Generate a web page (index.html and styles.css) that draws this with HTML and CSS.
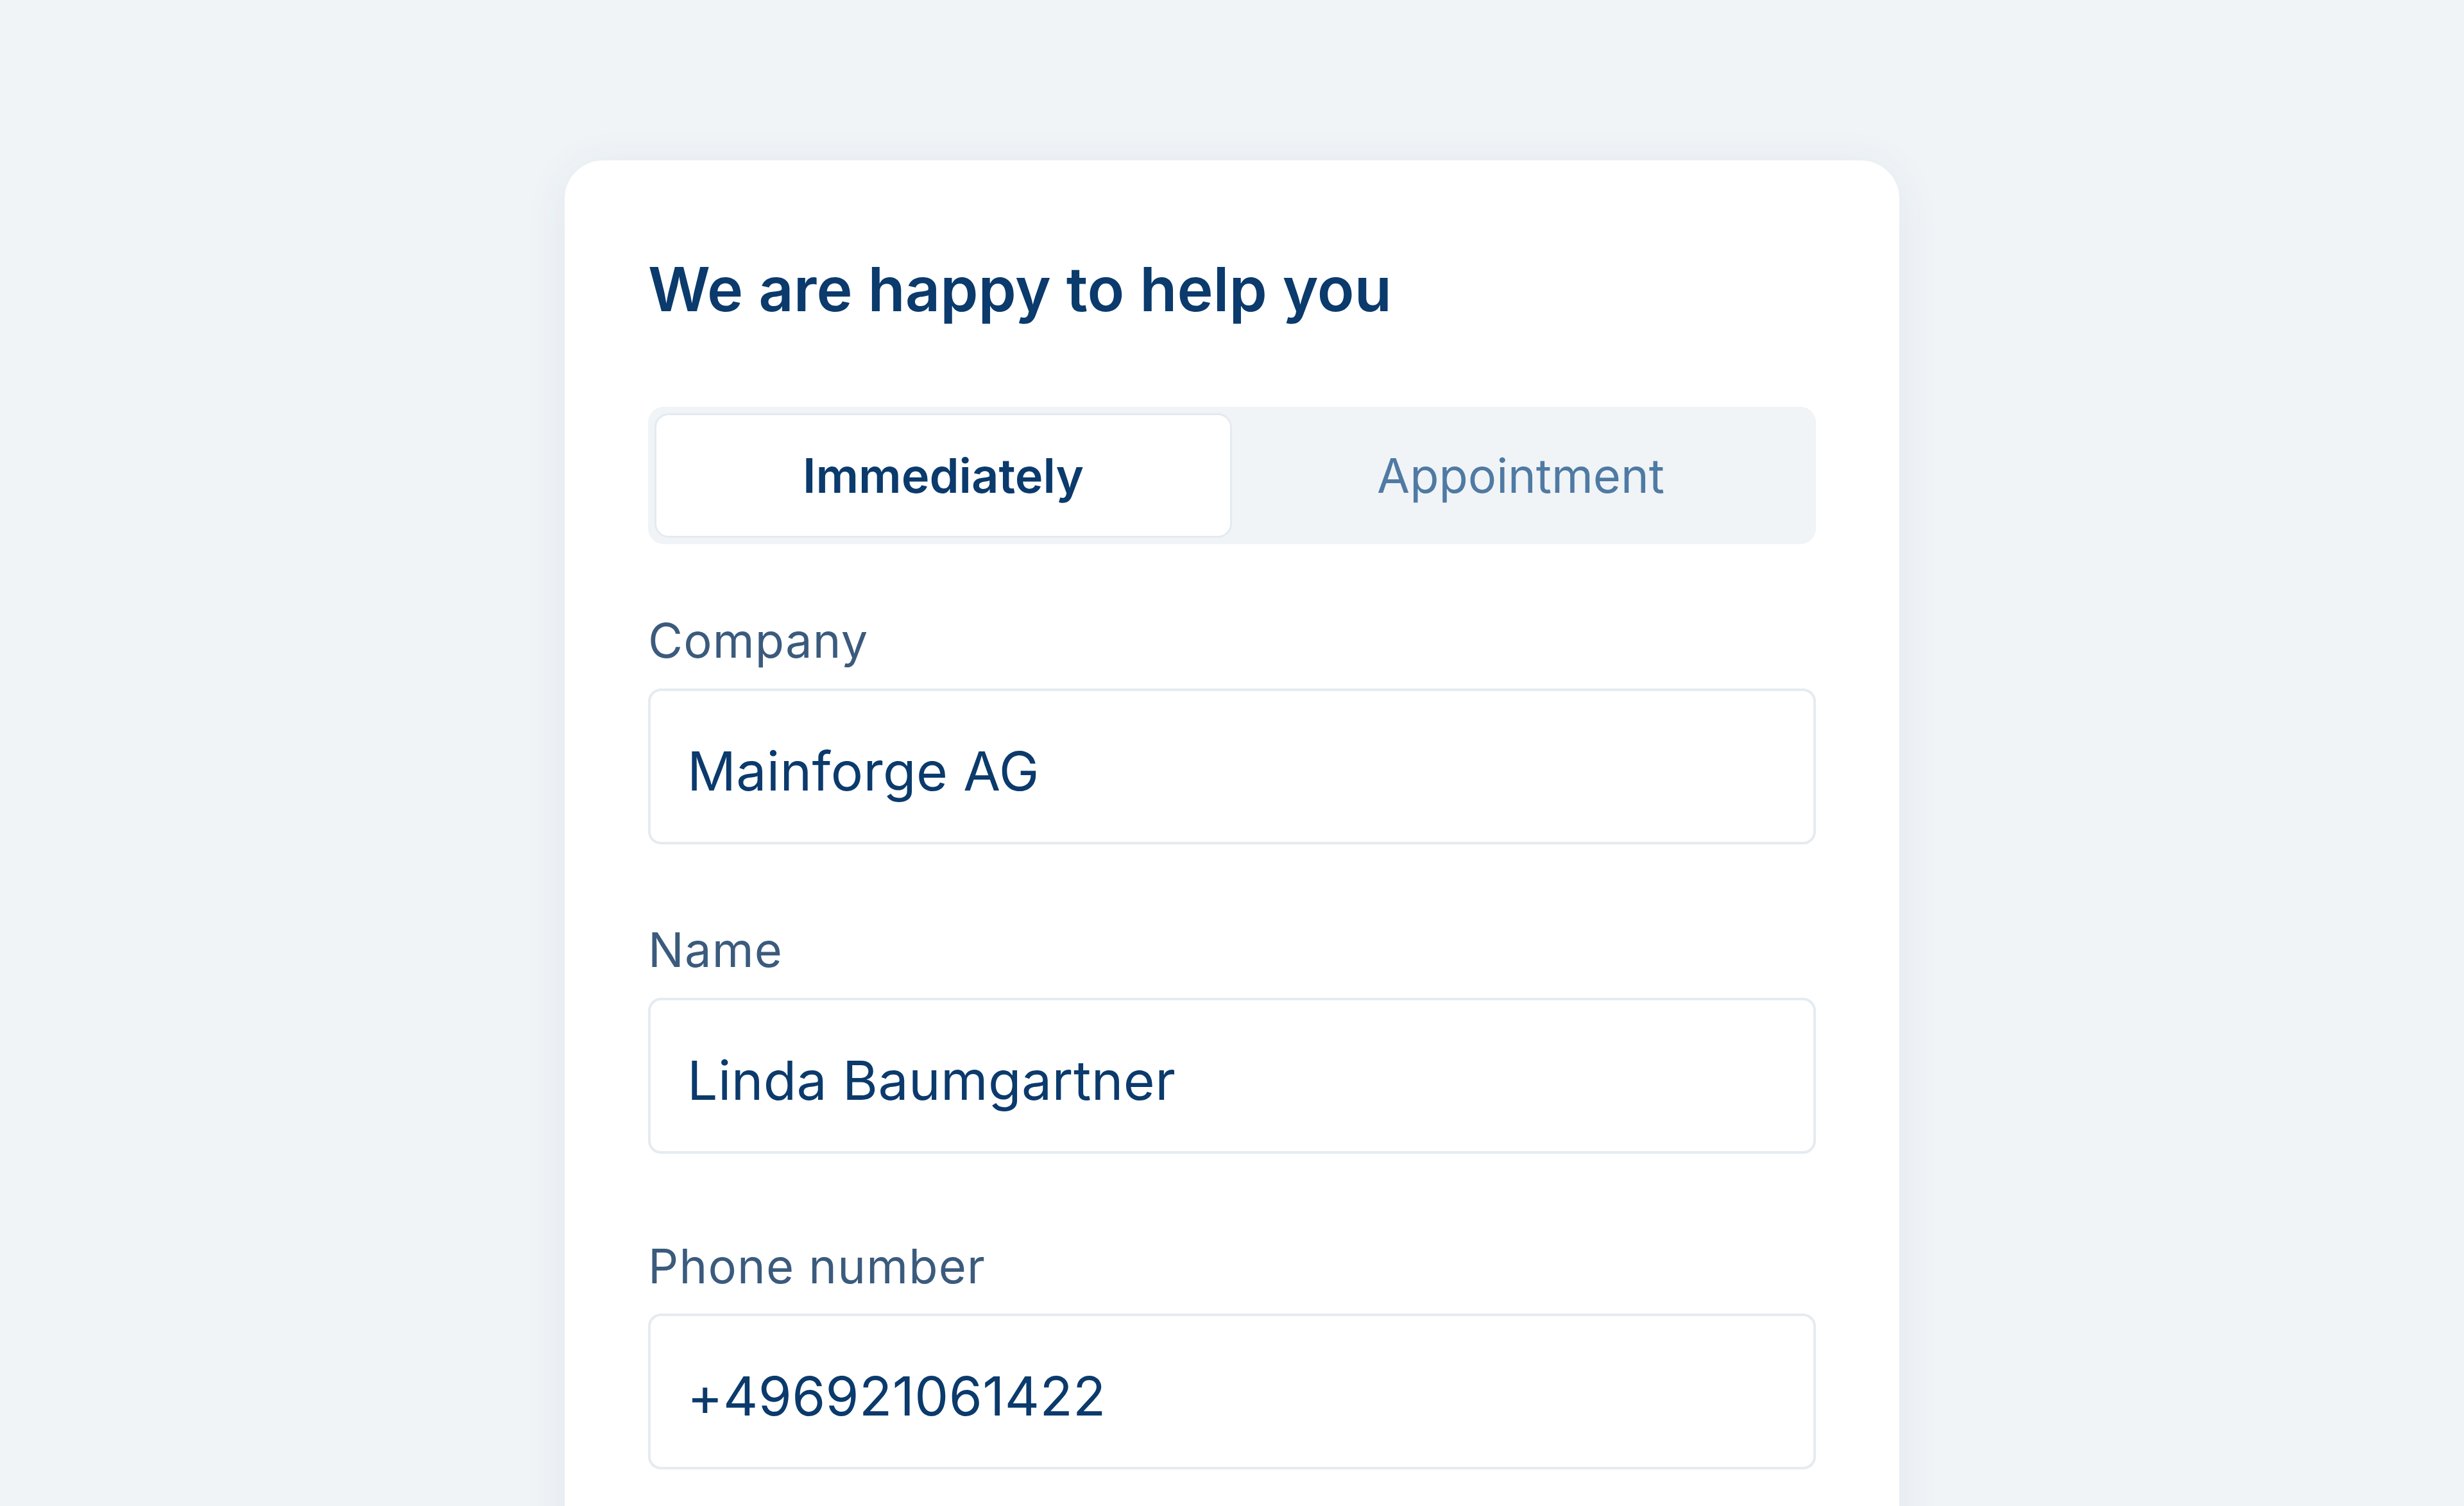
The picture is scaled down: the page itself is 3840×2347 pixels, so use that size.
FILE: index.html
```html
<!DOCTYPE html>
<html lang="en">
<head>
<meta charset="utf-8">
<title>We are happy to help you</title>
<link rel="stylesheet" href="styles.css">
</head>
<body>
<main class="page">
  <section class="card">
    <h1 class="title">We are happy to help you</h1>
    <div class="tabs">
      <div class="tab tab-active">Immediately</div>
      <div class="tab">Appointment</div>
    </div>
    <div class="field">
      <label class="label">Company</label>
      <div class="input">Mainforge AG</div>
    </div>
    <div class="field">
      <label class="label">Name</label>
      <div class="input">Linda Baumgartner</div>
    </div>
    <div class="field">
      <label class="label">Phone number</label>
      <div class="input">+496921061422</div>
    </div>
  </section>
</main>
</body>
</html>
```

FILE: styles.css
```css
* { box-sizing: border-box; }

html, body {
  margin: 0;
  padding: 0;
  height: 100%;
  overflow: hidden;
}

body {
  background: #f0f4f7;
  font-family: "Inter", "Noto Sans", "Liberation Sans", sans-serif;
  color: #0b3a6c;
}

.page {
  display: flex;
  justify-content: center;
  padding-top: 250px;
}

.card {
  width: 2080px;
  background: #ffffff;
  border-radius: 60px;
  padding: 144px 130px 300px;
  box-shadow: 0 10px 70px rgba(40, 70, 100, 0.07);
}

.title {
  margin: 0;
  font-size: 95px;
  line-height: 1.2;
  font-weight: 600;
  color: #0b3a6c;
  letter-spacing: 0;
}

.tabs {
  margin-top: 126px;
  display: grid;
  grid-template-columns: 1fr 1fr;
  padding: 10px;
  background: #f0f4f7;
  border-radius: 24px;
  height: 214px;
}

.tab {
  display: flex;
  align-items: center;
  justify-content: center;
  font-size: 74px;
  color: #4f7aa3;
  font-weight: 400;
  border-radius: 22px;
}

.tab-active {
  background: #ffffff;
  border: 3px solid #e4eaf0;
  color: #0b3a6c;
  font-weight: 600;
}

.field {
  margin-top: 106px;
}

.field + .field {
  margin-top: 120px;
}

.field:last-child {
  margin-top: 131px;
}

.label {
  display: block;
  font-size: 74px;
  line-height: 1.2;
  color: #3b5b7d;
  font-weight: 400;
  letter-spacing: 1.2px;
}

.input {
  margin-top: 30px;
  height: 243px;
  border: 4px solid #e5ebf1;
  border-radius: 20px;
  display: flex;
  align-items: center;
  padding: 14px 0 0 57px;
  font-size: 84px;
  letter-spacing: 0.4px;
  color: #0b3a6c;
}
```
